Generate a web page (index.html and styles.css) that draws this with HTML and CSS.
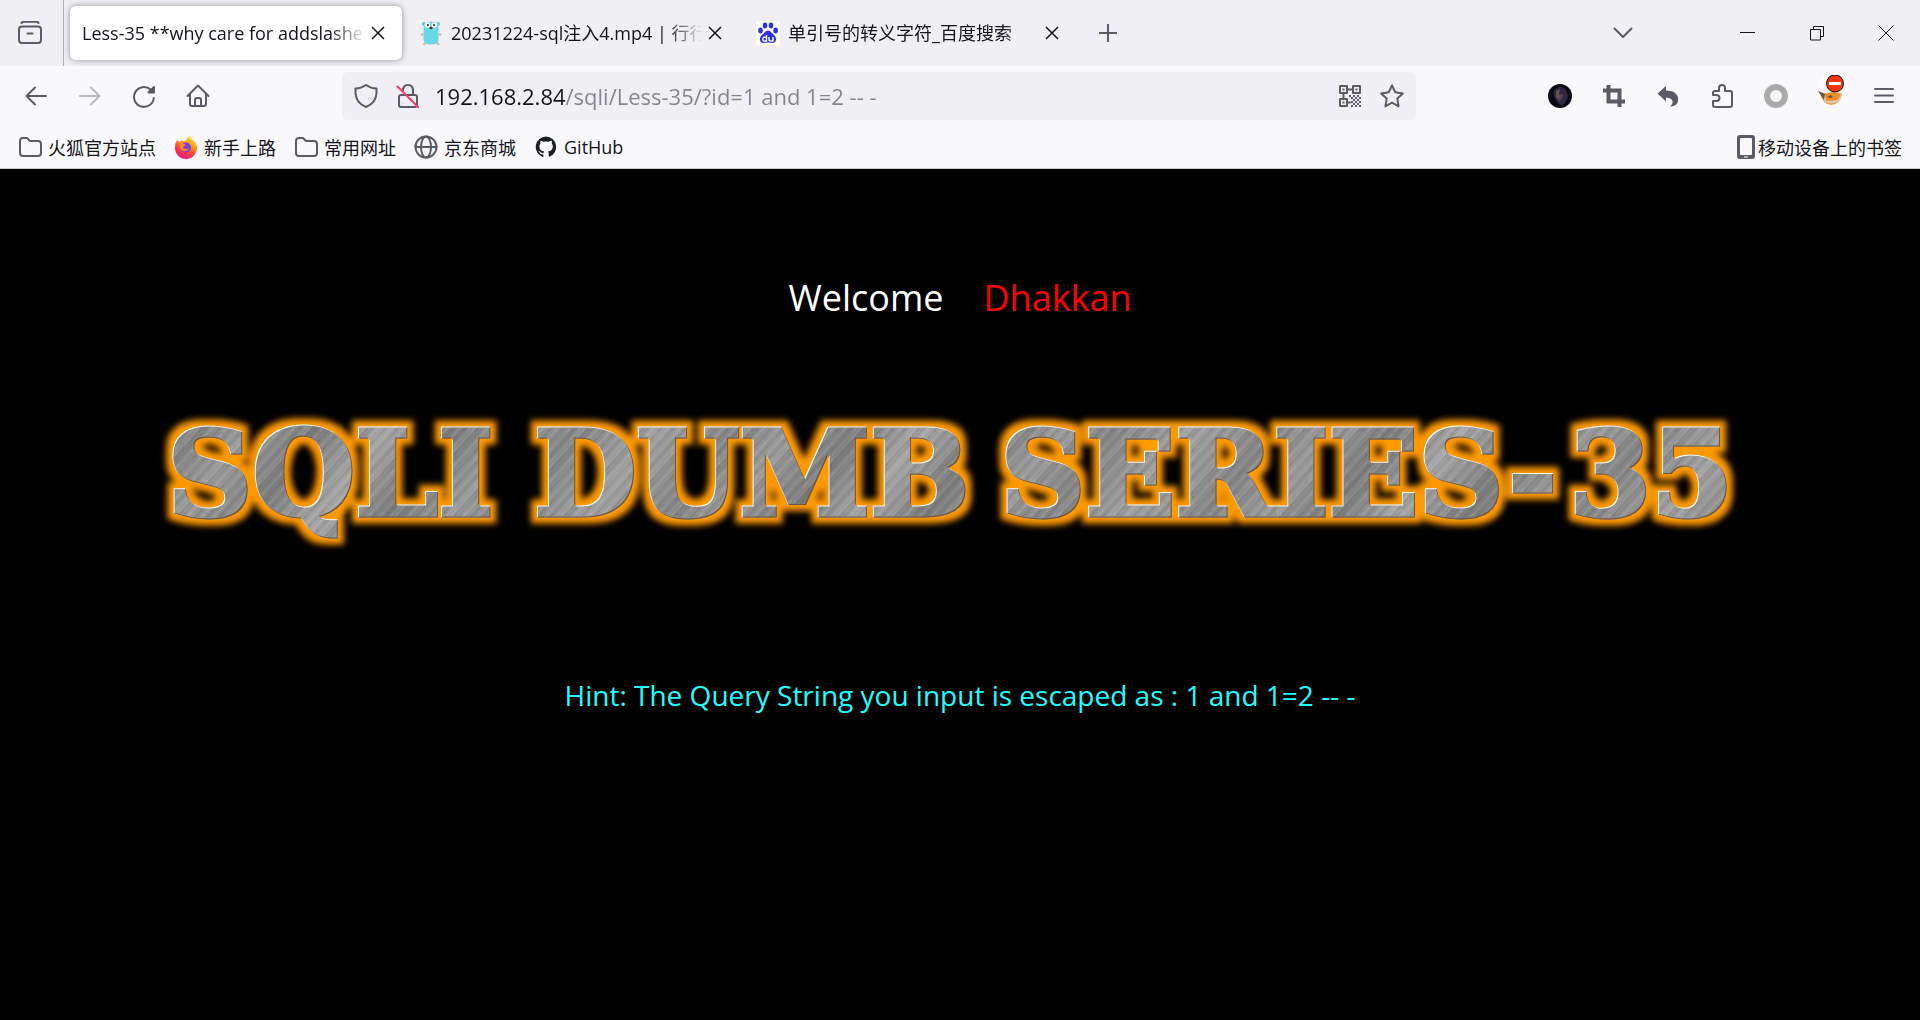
FILE: index.html
```html
<!DOCTYPE html>
<html lang="zh-CN">
<head>
<meta charset="utf-8">
<title>Less-35 **why care for addslashes()**</title>
<link rel="stylesheet" href="styles.css">
</head>
<body>
<header class="browser">
  <div class="tabbar">
    <button class="recent" aria-label="最近浏览"><svg class="icon" viewBox="0 0 24 24"><path d="M3.500 2Q4 .8 6 .8H18Q20 .8 20.500 2M4 5.500H20Q23 5.500 23 8.500V19Q23 22 20 22H4Q1 22 1 19V8.500Q1 5.500 4 5.500ZM9.500 12.500H14.500"/></svg></button>
    <nav class="tabs">
      <div class="tab active"><span class="label">Less-35 **why care for addslashes</span><button class="close" aria-label="关闭标签页"><svg viewBox="0 0 14 14"><path d="M1 1L13 13M13 1L1 13"/></svg></button></div>
      <div class="tab"><svg class="favicon" viewBox="0 0 24 24"><path d="M4 13L2 14M20 13L22 14M6 22L4.500 24M18 22L20 24" stroke="#d8b58c" stroke-width="2"/><circle cx="5" cy="3" r="2" fill="#5ac8da"/><circle cx="19" cy="3" r="2" fill="#5ac8da"/><path d="M4.500 7Q4 .5 12 .5T19.500 7V18Q20 23.500 12 23.500T4.500 18Z" fill="#6ad7e5"/><circle cx="8.500" cy="4" r="2.800" fill="#fff"/><circle cx="15.500" cy="4" r="2.800" fill="#fff"/><circle cx="9" cy="4" r="1" fill="#222"/><circle cx="15" cy="4" r="1" fill="#222"/><ellipse cx="12" cy="7" rx="1.700" ry="1.300" fill="#513b30"/></svg><span class="label">20231224-sql注入4.mp4 | 行行</span><button class="close" aria-label="关闭标签页"><svg viewBox="0 0 14 14"><path d="M1 1L13 13M13 1L1 13"/></svg></button></div>
      <div class="tab"><svg class="favicon" viewBox="0 0 24 24"><rect width="24" height="24" rx="2" fill="#fff"/><g fill="#2932e1"><ellipse cx="4.500" cy="9.500" rx="2.300" ry="2.900"/><ellipse cx="9" cy="4.600" rx="2.300" ry="3"/><ellipse cx="15" cy="4.600" rx="2.300" ry="3"/><ellipse cx="19.600" cy="9.500" rx="2.300" ry="2.900"/><path d="M12 9.500C14.500 9.500 15.500 12 17.500 13.500C21 16 21 21.500 17 22Q12 21 7 22C3 21.500 3 16 6.500 13.500C8.500 12 9.500 9.500 12 9.500Z"/></g><path d="M10.500 14V20H8Q6.800 20 6.800 18.200T8 16.300H10.500M13 16V18.500Q13 20 15 20H17V16" fill="none" stroke="#fff" stroke-width="1.400"/></svg><span class="label">单引号的转义字符_百度搜索</span><button class="close" aria-label="关闭标签页"><svg viewBox="0 0 14 14"><path d="M1 1L13 13M13 1L1 13"/></svg></button></div>
      <button class="tool" aria-label="新建标签页"><svg class="icon small" viewBox="0 0 18 18"><path d="M9 0V18M0 9H18"/></svg></button>
    </nav>
    <button class="tool all-tabs" aria-label="列出所有标签页"><svg class="icon" viewBox="0 0 24 24"><path d="M3.500 7.500L12 16L20.500 7.500"/></svg></button>
    <div class="window-buttons">
      <button aria-label="最小化"><svg viewBox="0 0 16 16"><path d="M0 7.500H15"/></svg></button>
      <button aria-label="还原"><svg viewBox="0 0 16 16"><path d="M1.500 4.500H11.500V15H1.500ZM4.500 4V1.500H14.500V11.500H12"/></svg></button>
      <button aria-label="关闭"><svg viewBox="0 0 16 16"><path d="M.5 .5L15.500 15.500M15.500 .5L.5 15.500"/></svg></button>
    </div>
  </div>

  <div class="toolbar">
    <button class="tool" aria-label="后退"><svg class="icon" viewBox="0 0 24 24"><path d="M22 12H2.500M11 3.500L2.500 12L11 20.500"/></svg></button>
    <button class="tool" aria-label="前进" disabled><svg class="icon" viewBox="0 0 24 24"><path d="M2 12H21.500M13 3.500L21.500 12L13 20.500"/></svg></button>
    <button class="tool" aria-label="刷新"><svg class="icon" viewBox="0 0 24 24"><path d="M21.800 14A9.900 9.900 0 1 1 18.500 5.500"/><path d="M22 3V8.500H16.500Z" fill="#5b5b66"/></svg></button>
    <button class="tool" aria-label="主页"><svg class="icon" viewBox="0 0 24 24"><path d="M1.500 12L12 1.500L22.500 12M4 10V20Q4 22 6 22H18Q20 22 20 20V10M9 22V16Q9 14 11 14H13Q15 14 15 16V22"/></svg></button>
    <form class="urlbar">
      <svg class="icon" viewBox="0 0 24 24"><path d="M12 1Q17 4.500 22.500 4.500V9Q22 19 12 23Q2 19 1.500 9V4.500Q7 4.500 12 1Z"/></svg>
      <svg class="icon" viewBox="0 0 24 24"><path d="M5 11H19Q21 11 21 13V21Q21 23 19 23H5Q3 23 3 21V13Q3 11 5 11ZM7 6.500Q7 1 12 1T17 6.500V11"/><path class="slash" d="M1.500 2.500L22 23"/></svg>
      <input class="address" aria-label="地址" value="192.168.2.84/sqli/Less-35/?id=1 and 1=2 -- -">
      <svg class="icon" viewBox="0 0 24 24"><path d="M2 2H9V9H2ZM15 2H22V9H15ZM2 15H9V22H2ZM9 5.500H15M5.500 9V15M9 18.500H12"/><path class="dots" d="M4.500 4.500h2v2h-2zM17.500 4.500h2v2h-2zM4.500 17.500h2v2h-2zM11 11h2v2h-2zM15 11h2v2h-2zM19 11h2v2h-2zM13 13h2v2h-2zM17 13h2v2h-2zM21 13h2v2h-2zM15 15h2v2h-2zM19 15h2v2h-2zM13 17h2v2h-2zM17 17h2v2h-2zM21 17h2v2h-2zM15 19h2v2h-2zM19 19h2v2h-2zM13 21h2v2h-2zM17 21h2v2h-2zM21 21h2v2h-2z"/></svg>
      <svg class="icon" viewBox="0 0 24 24"><path d="M12 1.500L15.300 8.300L22.800 9.400L17.300 14.600L18.600 22.300L12 18.700L5.400 22.300L6.700 14.600L1.200 9.400L8.700 8.300Z"/></svg>
    </form>
    <button class="tool" aria-label="账户"><svg class="icon" viewBox="0 0 24 24"><g stroke="none"><circle cx="12" cy="12" r="12" fill="#080812"/><path d="M9 4Q16 1 19 8T14 22Q8 18 6 12T9 4Z" fill="#2c2742"/><path d="M8 7L12 5L11 10L15 11L12 17L8 13Z" fill="#66504e"/><path d="M12 9L14 14L11 18Z" fill="#493c59"/></g></svg></button>
    <button class="tool" aria-label="截图"><svg class="icon" viewBox="0 0 24 24"><path d="M3 6.500H17.500V21M6.500 3V17.500H21" stroke-width="4" stroke-linecap="square" stroke-linejoin="miter"/></svg></button>
    <button class="tool" aria-label="撤销"><svg class="icon" viewBox="0 0 24 24"><path d="M1.500 9.500L10 2V6.500C19 6.500 23 11.500 22 17C21.500 20 19 22.500 14 22.500C18 19 18 14 10 13.500V17.500Z" fill="#5b5b66" stroke="none"/></svg></button>
    <button class="tool" aria-label="扩展"><svg class="icon" viewBox="0 0 24 24"><path d="M5 7H9V4Q9 1 12 1T15 4V7H20Q22 7 22 9V21Q22 23 20 23H5Q3 23 3 21V17H6Q9.500 17 9.500 14T6 11H3V9Q3 7 5 7Z"/></svg></button>
    <button class="tool" aria-label="代理"><svg class="icon" viewBox="0 0 24 24"><circle cx="12" cy="12" r="9" stroke="#aaa" stroke-width="6"/></svg></button>
    <button class="tool" aria-label="HackBar"><svg class="icon fox" viewBox="0 0 32 32"><g stroke="none"><rect x="4" width="27" height="17" rx="2" fill="#fff"/><path d="M3 18Q5 29 14 30Q24 29 25 18Z" fill="#f5a04c"/><path d="M1 16L8 19L16 16L25 18L23 26Q16 30 8 27Z" fill="#d9ccb4"/><path d="M8 19L16 17L24 19L21 25L9 26Z" fill="#f28c22"/><path d="M1 16L8 19L7 25M10 22L14 20L16 22L13 23Z" fill="#5e564d"/><circle cx="18" cy="8.500" r="9" fill="#111"/><circle cx="18" cy="8.500" r="8" fill="#f4360c"/><rect x="12" y="7" width="12" height="3" fill="#fff"/></g></svg></button>
    <button class="tool" aria-label="菜单"><svg class="icon" viewBox="0 0 24 24"><path d="M3 5H21M3 11.500H21M3 18H21"/></svg></button>
  </div>

  <nav class="bookmarks">
    <a href="#"><svg class="icon" viewBox="0 0 24 24"><path d="M5 3H9L12 6H20Q23 6 23 9V18Q23 21 20 21H5Q2 21 2 18V6Q2 3 5 3Z"/></svg>火狐官方站点</a>
    <a href="#"><svg class="icon" viewBox="0 0 24 24"><defs><linearGradient id="flame" x1=".8" y1="0" x2=".3" y2="1"><stop offset="0" stop-color="#fff44f"/><stop offset=".4" stop-color="#ff980e"/><stop offset=".7" stop-color="#ff3647"/><stop offset="1" stop-color="#e31587"/></linearGradient></defs><g stroke="none"><path d="M3 5L5 7Q7 5 9 6Q12 7 12 5Q14 2 15.500 0Q16 3 19 5Q23 8 23 13A11 11 0 0 1 1 13Q.5 9 3 5Z" fill="url(#flame)"/><circle cx="12" cy="12.500" r="5" fill="#7542e5"/><path d="M5 9Q8 7 12 10Q9 11 9 13Q12 15 16 13Q12 18 7 15Z" fill="#ff8a16"/></g></svg>新手上路</a>
    <a href="#"><svg class="icon" viewBox="0 0 24 24"><path d="M5 3H9L12 6H20Q23 6 23 9V18Q23 21 20 21H5Q2 21 2 18V6Q2 3 5 3Z"/></svg>常用网址</a>
    <a href="#"><svg class="icon" viewBox="0 0 24 24"><circle cx="12" cy="12" r="10.500"/><ellipse cx="12" cy="12" rx="5" ry="10.500"/><path d="M1.500 12H22.500"/></svg>京东商城</a>
    <a href="#"><svg class="icon" viewBox="0 0 24 24"><path stroke="none" fill="#1b1f23" d="M12 1.500a10.500 10.500 0 0 0-3.300 20.400c.5.100.7-.2.700-.5v-2c-2.900.6-3.500-1.300-3.500-1.300-.5-1.200-1.200-1.500-1.200-1.500-.9-.7.100-.7.100-.7 1 .1 1.600 1.100 1.600 1.100.9 1.600 2.500 1.100 3.100.9.100-.7.400-1.100.7-1.400-2.400-.3-4.800-1.200-4.800-5.200 0-1.100.4-2.100 1.100-2.800-.1-.3-.5-1.400.1-2.800 0 0 .9-.3 2.900 1.100a10 10 0 0 1 5.200 0c2-1.400 2.900-1.100 2.900-1.100.6 1.400.2 2.500.1 2.800.7.700 1.100 1.700 1.100 2.800 0 4-2.500 4.900-4.800 5.200.4.300.7 1 .7 1.900v2.900c0 .3.200.6.700.5A10.500 10.500 0 0 0 12 1.500Z"/></svg>GitHub</a>
    <a href="#" class="mobile"><svg class="icon phone" viewBox="0 0 18 24"><path fill="#5b5b66" fill-rule="evenodd" stroke="none" d="M3 0H15Q18 0 18 3V21Q18 24 15 24H3Q0 24 0 21V3Q0 0 3 0ZM4 3Q3 3 3 4V19Q3 20 4 20H14Q15 20 15 19V4Q15 3 14 3ZM7 21.500V22.500H11V21.500Z"/></svg>移动设备上的书签</a>
  </nav>
</header>

<main class="page">
  <p class="welcome">Welcome<span class="name">Dhakkan</span></p>
  <svg class="logo" viewBox="0 0 1640 170" role="img" aria-label="SQLI DUMB SERIES-35">
    <defs>
      <linearGradient id="steel" gradientUnits="userSpaceOnUse" x1="0" y1="0" x2="170" y2="130" spreadMethod="reflect">
        <stop offset="0" stop-color="#a0a0a0"/><stop offset=".3" stop-color="#858585"/><stop offset=".5" stop-color="#9a9a9a"/><stop offset=".75" stop-color="#7c7c7c"/><stop offset="1" stop-color="#a6a6a6"/>
      </linearGradient>
      <pattern id="brushed" width="41" height="1700" patternUnits="userSpaceOnUse" patternTransform="rotate(42)">
        <path d="M2 0V1700M11 0V1700M19 0V1700M22 0V1700M32 0V1700" stroke="#fff" stroke-opacity=".14"/>
        <path d="M6 0V1700M15 0V1700M25 0V1700M28 0V1700M38 0V1700" stroke="#222" stroke-opacity=".14"/>
      </pattern>
      <filter id="glow" filterUnits="userSpaceOnUse" x="0" y="0" width="1640" height="170" color-interpolation-filters="sRGB">
        <feMorphology in="SourceAlpha" operator="dilate" radius="6" result="fat"/>
        <feGaussianBlur in="fat" stdDeviation="3" result="soft"/>
        <feFlood flood-color="#ff9900"/>
        <feComposite in2="soft" operator="in" result="halo"/>
        <feOffset in="SourceAlpha" dx="1" dy="1" result="down"/>
        <feFlood flood-color="#fffbe8"/>
        <feComposite in2="SourceAlpha" operator="in"/>
        <feComposite in2="down" operator="out" result="light"/>
        <feOffset in="SourceAlpha" dx="-1" dy="-1" result="up"/>
        <feFlood flood-color="#6b5540"/>
        <feComposite in2="SourceAlpha" operator="in"/>
        <feComposite in2="up" operator="out" result="dark"/>
        <feMerge><feMergeNode in="halo"/><feMergeNode in="SourceGraphic"/><feMergeNode in="dark"/><feMergeNode in="light"/></feMerge>
      </filter>
    </defs>
    <g class="logo-text" filter="url(#glow)">
      <g fill="url(#steel)" stroke="url(#steel)"><text x="27" y="116">SQLI</text><text x="394" y="116">DUMB</text><text x="860" y="116">SERIES-</text><text x="1429" y="116">35</text></g>
      <g fill="url(#brushed)" stroke="url(#brushed)" aria-hidden="true"><text x="27" y="116">SQLI</text><text x="394" y="116">DUMB</text><text x="860" y="116">SERIES-</text><text x="1429" y="116">35</text></g>
    </g>
  </svg>
  <p class="hint">Hint: The Query String you input is escaped as : 1 and 1=2 -- -</p>
</main>
</body>
</html>
```
FILE: styles.css
```css
* { box-sizing: border-box; }

body {
  margin: 0;
  min-height: 100vh;
  display: flex;
  flex-direction: column;
  background: #000;
  color: #15141a;
  font-family: "Open Sans", "Noto Sans CJK SC", sans-serif;
  font-size: 18px;
}

button {
  display: flex;
  align-items: center;
  justify-content: center;
  padding: 0;
  border: 0;
  background: none;
  color: inherit;
}

svg { display: block; flex: none; }

.icon {
  width: 24px;
  height: 24px;
  fill: none;
  stroke: #5b5b66;
  stroke-width: 2;
  stroke-linecap: round;
  stroke-linejoin: round;
}
.icon.small { width: 18px; height: 18px; }
.icon.phone { width: 18px; }
.icon.fox { width: 32px; height: 32px; margin: 0 0 10px 6px; }
.slash { stroke: #ff3b6b; }
.dots { fill: #5b5b66; stroke: none; }

.browser { background: #f9f9fb; border-bottom: 1px solid #ccc; }

.tabbar { display: flex; height: 66px; background: #f0eff4; }
.recent { width: 64px; padding-right: 3px; border-right: 1px solid #b0afb5; }
.tabs { flex: 1; display: flex; align-items: center; gap: 5px; padding-left: 6px; min-width: 0; }
.tab {
  display: flex;
  align-items: center;
  gap: 8px;
  width: 332px;
  height: 54px;
  padding: 0 12px;
  border-radius: 6px;
}
.tab.active { background: #fff; box-shadow: 0 0 6px rgba(0, 0, 0, .4); }
.favicon { width: 24px; height: 24px; fill: none; }
.label {
  flex: 1;
  min-width: 0;
  margin-right: -8px;
  overflow: hidden;
  line-height: 26px;
  white-space: nowrap;
  mask-image: linear-gradient(to left, transparent, #000 36px);
}
.close { width: 24px; height: 24px; }
.close svg { width: 14px; height: 14px; stroke: #15141a; stroke-width: 1.5; }
.tool { width: 54px; height: 48px; }
.tool:disabled { opacity: .4; }
.all-tabs { align-self: center; margin-right: 63px; }
.window-buttons { display: flex; }
.window-buttons button { width: 69px; }
.window-buttons svg { width: 16px; height: 16px; fill: none; stroke: #15141a; }

.toolbar { display: flex; align-items: center; height: 60px; padding: 0 9px; }
.urlbar {
  flex: 1;
  display: flex;
  align-items: center;
  gap: 18px;
  height: 48px;
  min-width: 0;
  margin: 0 117px;
  padding: 0 12px;
  border-radius: 6px;
  background: #f0eff4;
}
.address {
  flex: 1;
  min-width: 0;
  margin-left: -3px;
  padding: 0;
  border: 0;
  outline: 0;
  color: transparent;
  background: linear-gradient(to right, #15141a 131px, #85848a 131px);
  background-clip: text;
  font: inherit;
  font-size: 22px;
}

.bookmarks { display: flex; align-items: center; gap: 18px; height: 42px; padding: 0 18px; }
.bookmarks a {
  display: flex;
  align-items: center;
  gap: 6px;
  color: inherit;
  text-decoration: none;
}
.bookmarks .mobile { gap: 3px; margin-left: auto; }

.page {
  flex: 1;
  display: flex;
  flex-direction: column;
  align-items: center;
  padding: 104px 24px;
  font-family: "Open Sans", sans-serif;
}
.page p { margin: 0; }
.welcome { display: flex; gap: 40px; color: #fff; font-size: 36px; line-height: 50px; }
.name { color: #f00; }
.logo { width: 1640px; max-width: 100%; margin: 76px 0 106px; }
.logo-text {
  font-family: "DejaVu Serif", serif;
  font-size: 118px;
  font-weight: 700;
  stroke-width: 5px;
}
.hint { color: #2ff; font-size: 28px; line-height: 40px; }
```
